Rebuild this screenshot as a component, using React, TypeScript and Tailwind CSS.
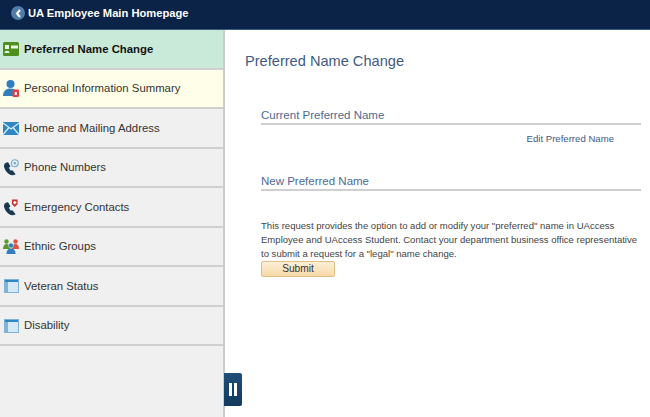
function IconCard() {
  return (
    <svg width="16" height="14" viewBox="0 0 16 14">
      <rect x="0" y="0" width="16" height="14" rx="1.500" fill="#4f8f1d" />
      <rect x="2" y="3" width="4" height="4" fill="#eef6e4" />
      <path d="M1.500 11c0-3 5-3 5 0z" fill="#eef6e4" />
      <rect x="8" y="3.500" width="7" height="3" fill="#eef6e4" />
    </svg>
  );
}
function IconPerson() {
  return (
    <svg width="16" height="17" viewBox="0 0 16 17">
      <circle cx="7.500" cy="4" r="4" fill="#2f7ec0" />
      <path d="M0 16c0-5 3-7.500 7.500-7.500 3 0 4.500 1.500 4.500 1.500v6z" fill="#2f7ec0" />
      <rect x="9.500" y="9.500" width="6.500" height="7.500" rx="1" fill="#e2433f" />
      <rect x="11.800" y="12" width="2" height="3" fill="#fff" />
    </svg>
  );
}
function IconMail() {
  return (
    <svg width="16" height="13" viewBox="0 0 16 13">
      <rect width="16" height="13" fill="#2f86c6" />
      <path d="M0 1l8 6 8-6M0 12.500l6-7M16 12.500l-6-7" stroke="#d9edf9" strokeWidth="1.300" fill="none" />
    </svg>
  );
}
function Phone({ badge }: { badge: "at" | "cross" }) {
  return (
    <svg width="17" height="17" viewBox="0 0 17 17">
      <path d="M2.500 4.500C0.500 7 3 12 6 14.500c2 1.700 5 2.300 6.500 1l-2.800-3.500-1.700.9C7 11.500 6 10 5.500 8.300l1.600-1L5 3.500z" fill="#17384f" stroke="#17384f" strokeWidth="1.300" strokeLinejoin="round" />
      {badge === "at" ? (
        <>
          <circle cx="12.500" cy="4" r="3.700" fill="none" stroke="#6eaedd" strokeWidth="1.200" />
          <circle cx="12.500" cy="4" r="1.400" fill="#6eaedd" />
        </>
      ) : (
        <>
          <path d="M9.500 0h6v5l-3 3-3-3z" fill="#c9302c" />
          <path d="M12.500 1.500v3.500M10.800 3.200h3.400" stroke="#fff" strokeWidth="1.400" />
        </>
      )}
    </svg>
  );
}
function IconGroups() {
  return (
    <svg width="16" height="15" viewBox="0 0 16 15">
      <circle cx="3.500" cy="2.500" r="2.200" fill="#5c9a2b" />
      <path d="M0 10c0-3.500 1.500-5 3.500-5S7 6.500 7 10z" fill="#5c9a2b" />
      <circle cx="12.500" cy="2.500" r="2.200" fill="#e2513a" />
      <path d="M9 10c0-3.500 1.500-5 3.500-5S16 6.500 16 10z" fill="#e2513a" />
      <circle cx="8" cy="6.500" r="2.500" fill="#2f7ec0" stroke="#f0f0f0" strokeWidth="0.500" />
      <path d="M3.500 15c0-4 2-5.500 4.500-5.500s4.500 1.500 4.500 5.500z" fill="#2f7ec0" />
    </svg>
  );
}
function IconForm() {
  return (
    <svg width="15" height="14" viewBox="0 0 15 14">
      <rect width="15" height="14" fill="#d5e8f6" />
      <rect width="15" height="3" fill="#2f86c6" />
      <rect y="3" width="4" height="11" fill="#7fb5dd" />
      <rect x="0.500" y="0.500" width="14" height="13" fill="none" stroke="#7db2db" />
    </svg>
  );
}

const items: { label: string; icon: React.ReactNode; cls: string; text: string }[] = [
  { label: "Preferred Name Change", icon: <IconCard />, cls: "bg-[#c9ead9]", text: "font-bold text-[#111111]" },
  { label: "Personal Information Summary", icon: <IconPerson />, cls: "bg-[#ffffe9]", text: "text-[#333333]" },
  { label: "Home and Mailing Address", icon: <IconMail />, cls: "", text: "text-[#333333]" },
  { label: "Phone Numbers", icon: <Phone badge="at" />, cls: "", text: "text-[#333333]" },
  { label: "Emergency Contacts", icon: <Phone badge="cross" />, cls: "", text: "text-[#333333]" },
  { label: "Ethnic Groups", icon: <IconGroups />, cls: "", text: "text-[#333333]" },
  { label: "Veteran Status", icon: <IconForm />, cls: "", text: "text-[#333333]" },
  { label: "Disability", icon: <IconForm />, cls: "", text: "text-[#333333]" },
];

export default function App() {
  return (
    <div className="relative flex h-[417px] w-[650px] flex-col overflow-hidden bg-white font-['Liberation_Sans',Arial,sans-serif]">
      <header className="flex h-[30px] shrink-0 items-center gap-[3px] border-b border-[#3a5a80] bg-[#0a2347] pl-[11px] pb-[3px]">
        <span className="flex h-[14px] w-[14px] items-center justify-center rounded-full bg-[#4f7da8]">
          <svg width="7" height="9" viewBox="0 0 7 9"><path d="M5 1L2 4.500 5 8" fill="none" stroke="#fff" strokeWidth="2" /></svg>
        </span>
        <span className="text-[11.200px] font-bold text-white">UA Employee Main Homepage</span>
      </header>
      <div className="flex min-h-0 flex-1">
        <nav className="flex w-[225px] shrink-0 flex-col border-r-2 border-[#cccccc] bg-[#f0f0f0]">
          {items.map((it) => (
            <div key={it.label} className={`flex h-[39.500px] shrink-0 items-center gap-[5px] border-b-2 border-[#cfcfcf] pl-[3px] pt-[1px] ${it.cls}`}>
              <span className="flex w-[16px] shrink-0 justify-center">{it.icon}</span>
              <span className={`text-[11.350px] ${it.text}`}>{it.label}</span>
            </div>
          ))}
        </nav>
        <main className="min-w-0 flex-1 pl-[20px] pr-[9px] pt-[22px]">
          <h1 className="text-[14.600px] leading-[19px] text-[#3f5a85]">Preferred Name Change</h1>
          <div className="ml-[16px] mt-[37px]">
            <h2 className="border-b-2 border-[#cfcfcf] pb-[1px] text-[11.500px] leading-[14px] text-[#4d6a94]">Current Preferred Name</h2>
            <div className="mt-[8px] pr-[27px] text-right text-[9.600px] leading-[12px] text-[#3f5a85]">Edit Preferred Name</div>
            <h2 className="mt-[29px] border-b-2 border-[#cfcfcf] pb-[1px] text-[11.500px] leading-[14px] text-[#4d6a94]">New Preferred Name</h2>
            <p className="mt-[28px] text-[9.550px] leading-[14px] text-[#444444]">
              This request provides the option to add or modify your "preferred" name in UAccess Employee and UAccess Student. Contact your department business office representative to submit a request for a "legal" name change.
            </p>
            <button className="block h-[16px] w-[74px] rounded-[2px] border border-[#e4bd80] bg-gradient-to-b from-[#fdf0d8] to-[#f8d9a8] text-[10.200px] leading-[14px] text-[#333333]">Submit</button>
          </div>
        </main>
      </div>
      <div className="absolute left-[224px] top-[373px] flex h-[33px] w-[18px] items-center justify-center gap-[2px] rounded-r-[2px] bg-gradient-to-b from-[#1f4f7a] to-[#133a5e]">
        <span className="h-[13px] w-[3px] bg-white" />
        <span className="h-[13px] w-[3px] bg-white" />
      </div>
    </div>
  );
}
